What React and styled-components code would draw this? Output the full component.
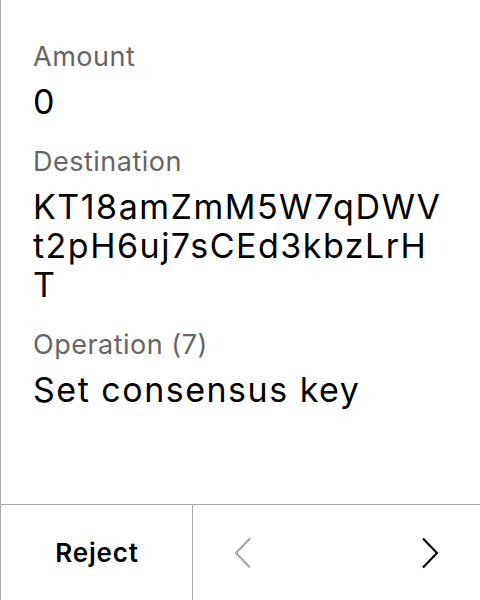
import React from "react";
import styled, { createGlobalStyle } from "styled-components";

const Global = createGlobalStyle`
  html, body { margin: 0; padding: 0; background: #fff; }
  body { font-family: Inter, "Noto Sans", sans-serif; }
  * { box-sizing: border-box; }
`;

const Screen = styled.div`
  width: 480px;
  height: 600px;
  display: flex;
  flex-direction: column;
  border-left: 1px solid #a8a8a8;
  background: #fff;
`;

const Content = styled.div`
  flex: 1;
  display: flex;
  flex-direction: column;
  gap: 25px;
  padding: 41px 32px 0 32px;
`;

const Field = styled.div`
  display: flex;
  flex-direction: column;
  gap: 10px;
`;

const Label = styled.div`
  font-size: 27px;
  line-height: 31px;
  letter-spacing: 0.5px;
  color: #666;
`;

const Value = styled.div`
  font-size: 34px;
  line-height: 39px;
  letter-spacing: 1.5px;
  color: #000;
  word-break: break-all;
`;

const Footer = styled.div`
  height: 96px;
  display: flex;
  border-top: 1px solid #a8a8a8;
`;

const RejectButton = styled.button`
  width: 192px;
  border: none;
  border-right: 1px solid #a8a8a8;
  background: none;
  font-family: inherit;
  font-size: 26px;
  font-weight: 600;
  letter-spacing: 0.8px;
  color: #000;
  padding: 0 0 0 1px;
`;

const Nav = styled.div`
  flex: 1;
  display: flex;
  align-items: center;
  justify-content: space-between;
  padding: 0 28px;
`;

const NavButton = styled.button`
  width: 44px;
  height: 44px;
  border: none;
  background: none;
  padding: 0;
  display: flex;
  align-items: center;
  justify-content: center;
  color: ${(p) => (p.$disabled ? "#a8a8a8" : "#000")};
`;

const Chevron = ({ dir }) => (
  <svg width="18" height="32" viewBox="0 0 18 32" fill="none">
    <path
      d={dir === "left" ? "M16 1.5 L2 16 L16 30.5" : "M2 1.5 L16 16 L2 30.5"}
      stroke="currentColor"
      strokeWidth="2.2"
    />
  </svg>
);

export default function App() {
  return (
    <>
      <Global />
      <Screen>
        <Content>
          <Field>
            <Label>Amount</Label>
            <Value>0</Value>
          </Field>
          <Field>
            <Label>Destination</Label>
            <Value>KT18amZmM5W7qDWVt2pH6uj7sCEd3kbzLrHT</Value>
          </Field>
          <Field>
            <Label>Operation (7)</Label>
            <Value>Set consensus key</Value>
          </Field>
        </Content>
        <Footer>
          <RejectButton>Reject</RejectButton>
          <Nav>
            <NavButton $disabled>
              <Chevron dir="left" />
            </NavButton>
            <NavButton>
              <Chevron dir="right" />
            </NavButton>
          </Nav>
        </Footer>
      </Screen>
    </>
  );
}
